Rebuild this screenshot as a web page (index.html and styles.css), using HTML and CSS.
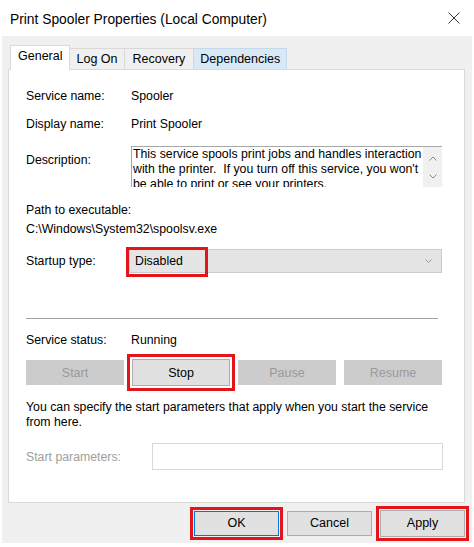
FILE: index.html
```html
<!DOCTYPE html>
<html>
<head>
<meta charset="utf-8">
<title>Print Spooler Properties</title>
<link rel="stylesheet" href="styles.css">
</head>
<body>
<div class="window">
  <div class="titlebar">
    <span class="title">Print Spooler Properties (Local Computer)</span>
    <svg class="close" width="12" height="12" viewBox="0 0 12 12"><path d="M0.5 0.5 L11.5 11.5 M11.5 0.5 L0.5 11.5" stroke="#333" stroke-width="1" fill="none"/></svg>
  </div>
  <div class="frame">
    <div class="tabs">
      <div class="tab active">General</div>
      <div class="tab">Log On</div>
      <div class="tab recovery">Recovery</div>
      <div class="tab hover">Dependencies</div>
    </div>
    <div class="panel">
      <div class="row"><span class="label">Service name:</span><span>Spooler</span></div>
      <div class="row"><span class="label">Display name:</span><span>Print Spooler</span></div>
      <div class="row desc">
        <span class="label desc-label">Description:</span>
        <div class="desc-box">
          <div class="desc-text">This service spools print jobs and handles interaction<br>with the printer.&nbsp; If you turn off this service, you won't<br>be able to print or see your printers.</div>
          <div class="desc-scroll">
            <svg width="8" height="5" viewBox="0 0 8 5"><path d="M0.5 4.5 L4 1 L7.5 4.5" stroke="#888" fill="none"/></svg>
            <svg width="8" height="5" viewBox="0 0 8 5"><path d="M0.5 0.5 L4 4 L7.5 0.5" stroke="#888" fill="none"/></svg>
          </div>
        </div>
      </div>
      <div class="path">
        <div>Path to executable:</div>
        <div>C:\Windows\System32\spoolsv.exe</div>
      </div>
      <div class="row startup">
        <span class="label">Startup type:</span>
        <div class="combo">
          <span class="combo-text">Disabled</span>
          <svg class="combo-arrow" width="7" height="4" viewBox="0 0 7 4"><path d="M0.5 0.5 L3.5 3.5 L6.5 0.5" stroke="#999" fill="none"/></svg>
          <span class="highlight combo-hl"></span>
        </div>
      </div>
      <div class="separator"></div>
      <div class="row status"><span class="label">Service status:</span><span>Running</span></div>
      <div class="svc-buttons">
        <button class="btn disabled">Start</button>
        <button class="btn marked-stop">Stop</button>
        <button class="btn disabled">Pause</button>
        <button class="btn disabled">Resume</button>
      </div>
      <p class="info">You can specify the start parameters that apply when you start the service<br>from here.</p>
      <div class="row params">
        <span class="label params-label">Start parameters:</span>
        <div class="input"></div>
      </div>
    </div>
    <div class="footer">
      <button class="btn dlg default marked">OK</button>
      <button class="btn dlg">Cancel</button>
      <button class="btn dlg marked apply">Apply</button>
    </div>
  </div>
</div>
</body>
</html>
```
FILE: styles.css
```css
* { box-sizing: border-box; }
html, body { margin: 0; padding: 0; background: #fff; }
body {
  font-family: "Liberation Sans", Arial, sans-serif;
  font-size: 12.3px;
  color: #000;
}
.window { width: 474px; height: 547px; background: #fff; }
.titlebar {
  height: 36px;
  display: flex;
  align-items: center;
  padding: 2px 14px 0 10px;
  justify-content: space-between;
}
.title { font-size: 13.8px; color: #000; }
.close { margin-top: -3px; }
.frame {
  margin: 0 2px;
  height: 507px;
  background: #f0f0f0;
  padding-top: 9px;
}
.tabs {
  display: flex;
  align-items: flex-end;
  height: 24px;
  padding-left: 8px;
  font-size: 12.5px;
}
.tab {
  height: 21px;
  padding: 0 6px;
  display: flex;
  align-items: center;
  background: #f0f0f0;
  border: 1px solid #d9d9d9;
  border-bottom: none;
  margin-left: -1px;
}
.tab.active {
  height: 25px;
  margin-bottom: -1px;
  background: #fff;
  padding: 0 7px 4px 7px;
  position: relative;
  z-index: 1;
  margin-left: 0;
}
.tab.recovery { padding: 0 8px; }
.tab.hover { background: #d9e8f5; border-color: #c4d9ec; }
.panel {
  width: 457px;
  height: 434px;
  margin-left: 6px;
  background: #fff;
  border: 1px solid #d9d9d9;
  padding: 12px 22px 0 17px;
}
.row { display: flex; align-items: center; height: 28px; }
.label { width: 105px; flex: none; }
.row.desc { height: auto; align-items: flex-start; margin-top: 8px; }
.desc-label { line-height: 15px; padding-top: 7px; }
.desc-box {
  width: 311px;
  height: 41px;
  border-top: 1px solid #a8a8a8;
  border-left: 1px solid #a8a8a8;
  display: flex;
}
.desc-text {
  flex: 1;
  padding-left: 1px;
  line-height: 15px;
  overflow: hidden;
  white-space: nowrap;
}
.desc-scroll {
  width: 19px;
  background: #f0f0f0;
  display: flex;
  flex-direction: column;
  align-items: center;
  gap: 13px;
  padding-top: 9px;
}
.path { margin-top: 14px; line-height: 19px; }
.row.startup { margin-top: 10px; height: 24px; }
.combo {
  position: relative;
  margin-left: -2px;
  width: 314px;
  height: 24px;
  background: #e5e5e5;
  border: 1px solid #cccccc;
  display: flex;
  align-items: center;
  justify-content: space-between;
  padding: 0 9px 0 5px;
}
.highlight {
  position: absolute;
  border: 3px solid #e3141c;
}
.combo-hl { left: -4px; top: -3px; width: 82px; height: 30px; }
.separator {
  margin-top: 45px;
  height: 1px;
  background: #a0a0a0;
  margin-right: 4px;
}
.row.status { margin-top: 11px; height: 20px; }
.svc-buttons {
  margin-top: 10px;
  display: grid;
  grid-template-columns: repeat(4, 1fr);
  gap: 8px;
  height: 25px;
}
.btn {
  font-family: inherit;
  font-size: 12.5px;
  height: 25px;
  background: #e1e1e1;
  border: 1px solid #adadad;
  color: #000;
  padding: 0;
}
.btn.disabled { background: #cccccc; border-color: #cccccc; color: #9a9a9a; }
.marked-stop { outline: 3px solid #e3141c; outline-offset: 2px; height: 27px; margin-top: -1px; }
.info { margin: 15px 0 0 0; line-height: 15px; }
.row.params { margin-top: 13px; height: 27px; }
.params-label { width: 126px; color: #a0a0a0; }
.input {
  flex: 1;
  height: 27px;
  margin-right: -1px;
  border: 1px solid #d9d9d9;
  background: #fff;
}
.footer {
  height: 40px;
  display: flex;
  justify-content: flex-end;
  align-items: center;
  padding: 0 7px 0 0;
  gap: 8px;
}
.btn.dlg { width: 85px; height: 25px; }
.btn.default { border-color: #0078d7; }
.btn.marked { outline: 3px solid #e3141c; outline-offset: 1px; }
.btn.apply { outline-offset: 1px; height: 27px; }
```
